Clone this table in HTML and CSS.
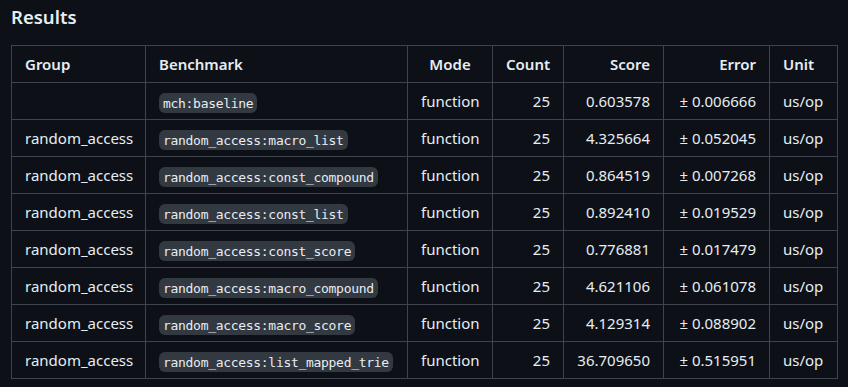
FILE: index.html
```html
<!DOCTYPE html>
<html>
<head>
<meta charset="utf-8">
<link rel="stylesheet" href="styles.css">
</head>
<body>
<div class="markdown">
<h3 class="title">Results</h3>
<table class="results">
<colgroup>
<col class="c-group"><col class="c-bench"><col class="c-mode"><col class="c-count"><col class="c-score"><col class="c-error"><col class="c-unit">
</colgroup>
<thead>
<tr><th class="l">Group</th><th class="l">Benchmark</th><th class="c">Mode</th><th class="r">Count</th><th class="r">Score</th><th class="r">Error</th><th class="l">Unit</th></tr>
</thead>
<tbody>
<tr><td class="l"></td><td class="l"><code>mch:baseline</code></td><td class="c">function</td><td class="r">25</td><td class="r">0.603578</td><td class="r">± 0.006666</td><td class="l">us/op</td></tr>
<tr><td class="l">random_access</td><td class="l"><code>random_access:macro_list</code></td><td class="c">function</td><td class="r">25</td><td class="r">4.325664</td><td class="r">± 0.052045</td><td class="l">us/op</td></tr>
<tr><td class="l">random_access</td><td class="l"><code>random_access:const_compound</code></td><td class="c">function</td><td class="r">25</td><td class="r">0.864519</td><td class="r">± 0.007268</td><td class="l">us/op</td></tr>
<tr><td class="l">random_access</td><td class="l"><code>random_access:const_list</code></td><td class="c">function</td><td class="r">25</td><td class="r">0.892410</td><td class="r">± 0.019529</td><td class="l">us/op</td></tr>
<tr><td class="l">random_access</td><td class="l"><code>random_access:const_score</code></td><td class="c">function</td><td class="r">25</td><td class="r">0.776881</td><td class="r">± 0.017479</td><td class="l">us/op</td></tr>
<tr><td class="l">random_access</td><td class="l"><code>random_access:macro_compound</code></td><td class="c">function</td><td class="r">25</td><td class="r">4.621106</td><td class="r">± 0.061078</td><td class="l">us/op</td></tr>
<tr><td class="l">random_access</td><td class="l"><code>random_access:macro_score</code></td><td class="c">function</td><td class="r">25</td><td class="r">4.129314</td><td class="r">± 0.088902</td><td class="l">us/op</td></tr>
<tr><td class="l">random_access</td><td class="l"><code>random_access:list_mapped_trie</code></td><td class="c">function</td><td class="r">25</td><td class="r">36.709650</td><td class="r">± 0.515951</td><td class="l">us/op</td></tr>
</tbody>
</table>
</div>
</body>
</html>
```

FILE: styles.css
```css
html, body {
  margin: 0;
  padding: 0;
  background: #0d1117;
}
.markdown {
  padding: 5px 11px 0 11px;
  color: #e6edf3;
  font-family: "Noto Sans", "Open Sans", sans-serif;
  font-size: 15px;
  line-height: 24px;
}
.title {
  margin: 0 0 16px 0;
  font-size: 18.5px;
  font-weight: 600;
  line-height: 24px;
  color: #e6edf3;
}
.results {
  border-collapse: collapse;
  border-spacing: 0;
  table-layout: fixed;
  width: 827px;
}
.c-group { width: 134px; }
.c-bench { width: 262px; }
.c-mode { width: 85px; }
.c-count { width: 71px; }
.c-score { width: 100px; }
.c-error { width: 106px; }
.c-unit { width: 68px; }
.results th,
.results td {
  border: 1px solid #3d444d;
  padding: 6px 13px;
  white-space: nowrap;
  height: 24px;
  box-sizing: content-box;
}
.results th {
  font-weight: 600;
}
.l { text-align: left; }
.c { text-align: center; }
.r { text-align: right; }
code {
  font-family: "DejaVu Sans Mono", "Liberation Mono", monospace;
  font-size: 13px;
  letter-spacing: -0.3px;
  line-height: 16px;
  padding: 2.5px 4px;
  border-radius: 6px;
  background: rgba(110, 118, 129, 0.4);
}
```
